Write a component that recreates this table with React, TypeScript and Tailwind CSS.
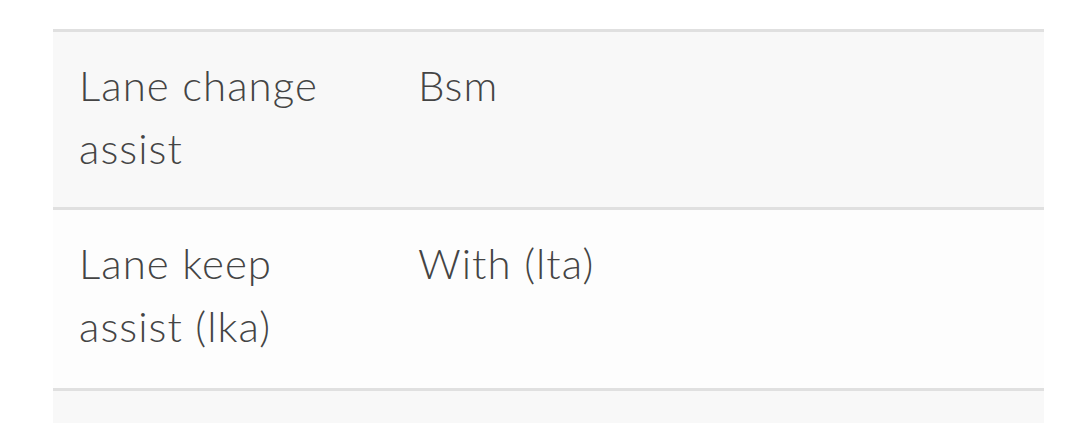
const ROWS = [
  { label: "Lane change assist", value: "Bsm", height: "h-[178px]", bg: "bg-[#f8f8f8]" },
  { label: "Lane keep assist (lka)", value: "With (lta)", height: "h-[181px]", bg: "bg-[#fdfdfd]" },
];

export default function App() {
  return (
    <div className="min-h-screen bg-white pt-[29px] font-['Lato','Liberation_Sans',sans-serif] font-light text-[#444]">
      <div className="ml-[53px] w-[991px] border-t-[3px] border-[#e0e0e0]">
        {ROWS.map((row) => (
          <div
            key={row.label}
            className={`flex border-b-[3px] border-[#e0e0e0] pt-[22px] text-[42px] leading-[63px] tracking-[0.025em] ${row.height} ${row.bg}`}
          >
            <div className="w-[339px] shrink-0 pl-[26px] pr-[20px]">{row.label}</div>
            <div className="pl-[26px]">{row.value}</div>
          </div>
        ))}
        {/* next row, cut off below the fold */}
        <div className="h-[175px] bg-[#f8f8f8]" />
      </div>
    </div>
  );
}
